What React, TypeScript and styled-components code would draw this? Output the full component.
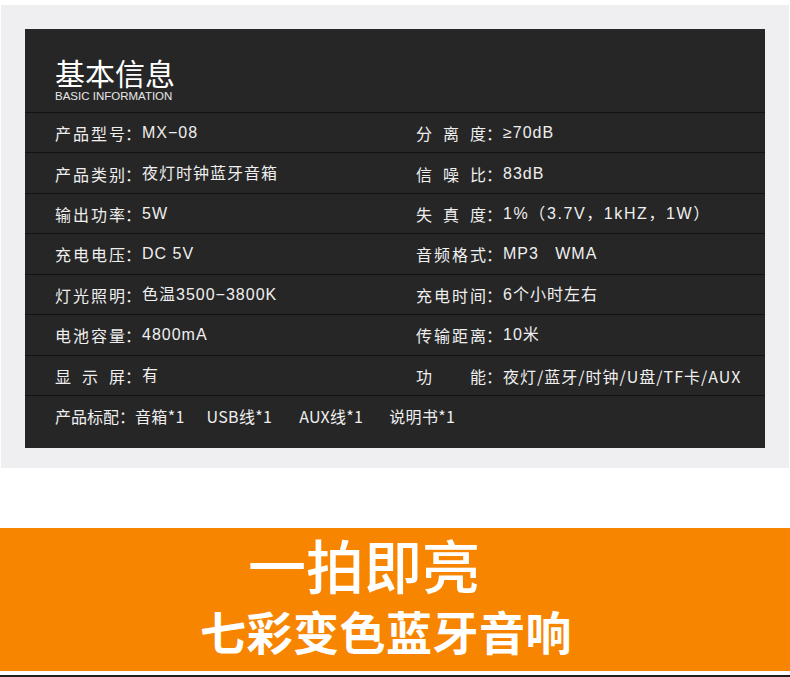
import React from "react";
import styled, { createGlobalStyle } from "styled-components";

const Global = createGlobalStyle`
  html, body { margin: 0; padding: 0; background: #ffffff; }
  body { font-family: "Noto Sans CJK SC", "Noto Sans", sans-serif; }
  * { box-sizing: border-box; }
`;

const Page = styled.div`
  width: 790px;
  height: 677px;
  overflow: hidden;
  background: #ffffff;
  padding-top: 5px;
`;

const GraySection = styled.section`
  margin-left: 1px;
  width: 788px;
  background: #efeff1;
  padding: 24px 24px 20px 24px;
`;

const Panel = styled.div`
  background: #262626;
  color: #efefef;
  height: 419px;
  display: flex;
  flex-direction: column;
`;

const Header = styled.header`
  height: 84px;
  border-bottom: 1px solid #121212;
  padding: 25px 0 0 30px;
`;

const Title = styled.h1`
  margin: 0;
  font-size: 30px;
  line-height: 36px;
  font-weight: 400;
  color: #ffffff;
`;

const Subtitle = styled.div`
  font-family: "Liberation Sans", Arial, sans-serif;
  font-size: 11.5px;
  line-height: 13px;
  margin-top: 0;
  color: #e6e6e6;
`;

const Row = styled.div<{ $last?: boolean }>`
  display: grid;
  grid-template-columns: 361px 1fr;
  align-items: center;
  height: ${(p) => (p.$last ? "52px" : "40.43px")};
  padding-left: 30px;
  padding-top: ${(p) => (p.$last ? "0" : "1px")};
  padding-bottom: ${(p) => (p.$last ? "12px" : "0")};
  border-bottom: ${(p) => (p.$last ? "none" : "1px solid #121212")};
`;

const Cell = styled.div<{ $condensed?: boolean }>`
  display: flex;
  align-items: center;
  white-space: nowrap;
  font-family: ${(p) =>
    p.$condensed
      ? `"Noto Sans CJK SC", sans-serif`
      : `"Liberation Sans", "Noto Sans CJK SC", sans-serif`};
  font-size: 16px;
  line-height: 20px;
  letter-spacing: 1px;
`;

const Label = styled.span`
  display: inline-block;
  width: 70px;
  font-family: "Noto Sans CJK SC", sans-serif;
  text-align: justify;
  text-align-last: justify;
  letter-spacing: 0;
`;

const Colon = styled.span`
  display: inline-block;
  width: 17px;
  font-family: "Noto Sans CJK SC", sans-serif;
  letter-spacing: 0;
`;

const Value = styled.span<{ $wide?: boolean }>`
  letter-spacing: ${(p) => (p.$wide ? "1.6px" : "inherit")};
`;

const Item = styled.span<{ $gap: number }>`
  margin-right: ${(p) => p.$gap}px;
  letter-spacing: 0.3px;
`;

const Spacer = styled.div`
  height: 60px;
`;

const Banner = styled.section`
  height: 143px;
  background: #f88500;
  color: #ffffff;
  padding: 6px 0 0 200px;
  display: flex;
  flex-direction: column;
`;

const BannerTitle = styled.div`
  margin-left: 48px;
  font-size: 58px;
  line-height: 60px;
  font-weight: 500;
`;

const BannerSub = styled.div`
  margin-top: 12px;
  font-size: 46px;
  line-height: 48px;
  font-weight: 700;
  letter-spacing: 0.5px;
`;

const BottomLine = styled.div`
  margin-top: 4px;
  height: 2px;
  background: #1e1e1a;
`;

type Spec = { label: string; value: string; condensed?: boolean; wide?: boolean };

const rows: [Spec, Spec][] = [
  [
    { label: "产品型号", value: "MX−08" },
    { label: "分离度", value: "≥70dB" },
  ],
  [
    { label: "产品类别", value: "夜灯时钟蓝牙音箱" },
    { label: "信噪比", value: "83dB" },
  ],
  [
    { label: "输出功率", value: "5W" },
    { label: "失真度", value: "1%（3.7V，1kHZ，1W）", wide: true },
  ],
  [
    { label: "充电电压", value: "DC 5V" },
    { label: "音频格式", value: "MP3\u00a0\u00a0\u00a0WMA" },
  ],
  [
    { label: "灯光照明", value: "色温3500−3800K" },
    { label: "充电时间", value: "6个小时左右" },
  ],
  [
    { label: "电池容量", value: "4800mA" },
    { label: "传输距离", value: "10米" },
  ],
  [
    { label: "显示屏", value: "有" },
    { label: "功能", value: "夜灯/蓝牙/时钟/U盘/TF卡/AUX", condensed: true },
  ],
];

const SpecCell: React.FC<{ spec: Spec }> = ({ spec }) => (
  <Cell $condensed={spec.condensed}>
    <Label>{spec.label}</Label>
    <Colon>：</Colon>
    <Value $wide={spec.wide}>{spec.value}</Value>
  </Cell>
);

export default function App() {
  return (
    <>
      <Global />
      <Page>
        <GraySection>
          <Panel>
            <Header>
              <Title>基本信息</Title>
              <Subtitle>BASIC INFORMATION</Subtitle>
            </Header>
            {rows.map(([a, b], i) => (
              <Row key={i}>
                <SpecCell spec={a} />
                <SpecCell spec={b} />
              </Row>
            ))}
            <Row $last>
              <Cell $condensed>
                <Label>产品标配</Label>
                <Colon>：</Colon>
                <Item $gap={22}>音箱*1</Item>
                <Item $gap={27}>USB线*1</Item>
                <Item $gap={26}>AUX线*1</Item>
                <Item $gap={0}>说明书*1</Item>
              </Cell>
            </Row>
          </Panel>
        </GraySection>
        <Spacer />
        <Banner>
          <BannerTitle>一拍即亮</BannerTitle>
          <BannerSub>七彩变色蓝牙音响</BannerSub>
        </Banner>
        <BottomLine />
      </Page>
    </>
  );
}
